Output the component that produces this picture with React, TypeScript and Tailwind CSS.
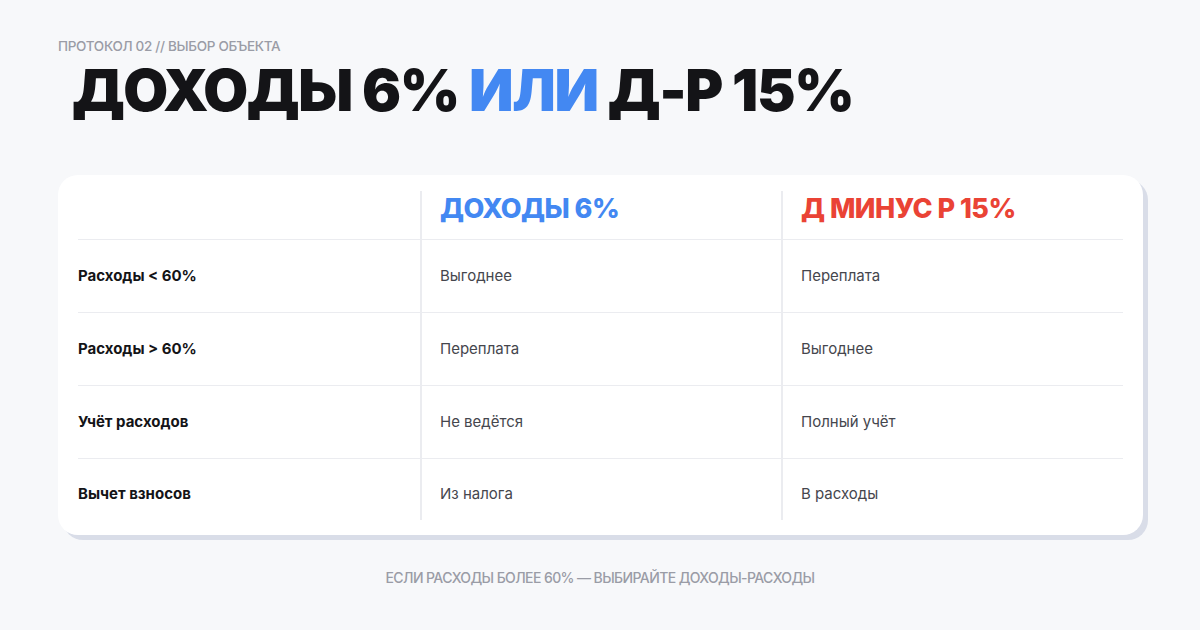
export default function App() {
  const rows = [
    ["Расходы < 60%", "Выгоднее", "Переплата"],
    ["Расходы > 60%", "Переплата", "Выгоднее"],
    ["Учёт расходов", "Не ведётся", "Полный учёт"],
    ["Вычет взносов", "Из налога", "В расходы"],
  ];
  return (
    <div className="w-[1200px] h-[630px] bg-[#f7f8fa] overflow-hidden flex flex-col" style={{ fontFamily: "Inter, 'Noto Sans', sans-serif" }}>
      <div className="pl-[58px] pt-[37px] text-[13.5px] font-medium text-[#9a9ca6] tracking-[-0.3px] leading-[18px]">ПРОТОКОЛ 02 // ВЫБОР ОБЪЕКТА</div>
      <h1 className="pl-[72px] mt-[2px] text-[58px] font-black leading-[66px] tracking-[-1.4px] text-[#141417]">
        ДОХОДЫ 6% <span className="text-[#4388f2]">ИЛИ</span> Д-Р 15%
      </h1>
      <div className="mx-[58px] mt-[52px] w-[1085px] h-[360px] bg-white rounded-[20px] shadow-[5px_5px_0_0_#d9dde8] px-[20px] pt-[16px] pb-[15px]">
        <div className="grid grid-cols-[342px_361px_342px] h-full">
          <div className="border-b border-[#ebecf0] h-[49px]" />
          <div className="border-b border-l-2 border-[#ebecf0] h-[49px] pl-[18px] flex items-center pb-[16px] pt-[4px]">
            <span className="text-[27px] font-extrabold text-[#4388f2] tracking-[-0.5px]">ДОХОДЫ 6%</span>
          </div>
          <div className="border-b border-l-2 border-[#ebecf0] h-[49px] pl-[18px] flex items-center pb-[16px] pt-[4px]">
            <span className="text-[27px] font-extrabold text-[#ea4335] tracking-[-0.5px]">Д МИНУС Р 15%</span>
          </div>
          {rows.map((r, i) => {
            const last = i === rows.length - 1;
            const h = last ? "h-[61px] items-start pt-[25px]" : "h-[73px] border-b items-center";
            return [
              <div key={i + "a"} className={`${h} border-[#ebecf0] flex text-[15px] leading-[20px] font-bold text-[#141417]`}>{r[0]}</div>,
              <div key={i + "b"} className={`${h} border-l-2 border-[#ebecf0] pl-[18px] flex text-[15px] leading-[20px] text-[#45464d]`}>{r[1]}</div>,
              <div key={i + "c"} className={`${h} border-l-2 border-[#ebecf0] pl-[18px] flex text-[15px] leading-[20px] text-[#45464d]`}>{r[2]}</div>,
            ];
          })}
        </div>
      </div>
      <div className="mt-[32px] text-center text-[14px] font-medium text-[#9a9ca6] tracking-[-0.6px]">ЕСЛИ РАСХОДЫ БОЛЕЕ 60% — ВЫБИРАЙТЕ ДОХОДЫ-РАСХОДЫ</div>
    </div>
  );
}
